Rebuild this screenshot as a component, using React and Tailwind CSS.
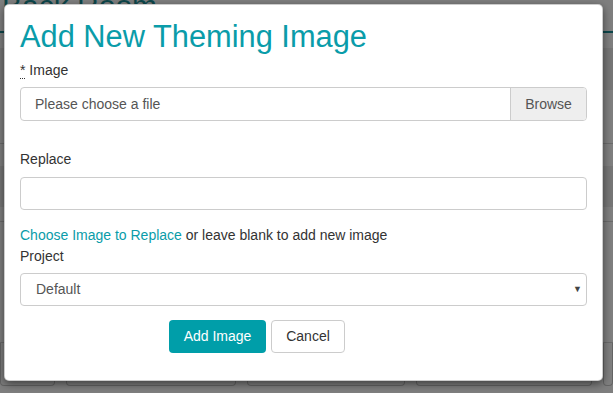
import { useState } from 'react'

function Backdrop() {
  // page behind the dialog (dimmed by the overlay)
  return (
    <div className="flex h-full flex-col bg-white">
      <div className="h-[33px] border-b-2 border-[#1b8f96] pl-[2px]">
        <div className="-mt-[12px] text-[30px] leading-[36px] text-[#1b8f96]">Back Room</div>
      </div>
      <div className="h-[15px]" />
      <div className="h-[42px] bg-[#ececec]" />
      <div className="h-[54px] border-b border-[#d6d6d6]" />
      <div className="h-[22px]" />
      <div className="h-[41px] bg-[#ececec]" />
      <div className="h-[15px] border-b border-[#d6d6d6]" />
      <div className="h-[121px] border-b border-[#d6d6d6]" />
      <div className="flex h-[43px] gap-[11px]">
        <div className="w-[55px] rounded-b border border-t-0 border-[#c9c9c9]" />
        <div className="w-[170px] rounded-b border border-t-0 border-[#c9c9c9]" />
        <div className="w-[158px] rounded-b border border-t-0 border-[#c9c9c9]" />
        <div className="w-[176px] rounded-b border border-t-0 border-[#c9c9c9]" />
        <div className="flex-1 rounded-b border border-t-0 border-[#c9c9c9]" />
      </div>
    </div>
  )
}

export default function App() {
  const [project, setProject] = useState('Default')

  return (
    <div
      className="relative h-[393px] w-[613px] overflow-hidden text-[14px] text-[#333]"
      style={{ fontFamily: '"Liberation Sans", Arial, sans-serif' }}
    >
      <Backdrop />
      <div className="absolute inset-0 bg-black/50" />

      <div className="absolute left-[4px] top-[4px] h-[377px] w-[599px] rounded-[5px] border border-black/20 bg-white px-[15px] shadow-[0_3px_9px_rgba(0,0,0,0.5)]">
        <h2 className="mt-[13px] text-[30.8px] leading-[38px] text-[#0a9ca9]">Add New Theming Image</h2>

        <label className="mt-[4px] block leading-[20px]">
          <abbr className="cursor-help border-b border-dotted border-[#333] no-underline" title="required">*</abbr> Image
        </label>
        <div className="mt-[7px] flex h-[34px] rounded-[4px] border border-[#ccc]">
          <div className="flex flex-1 items-center pl-[14px] text-[#555]">Please choose a file</div>
          <div className="flex w-[76px] items-center justify-center rounded-r-[3px] border-l border-[#ccc] bg-[#eee] text-[#555]">
            Browse
          </div>
        </div>

        <label className="mt-[28px] block leading-[20px]">Replace</label>
        <input className="mt-[8px] block h-[33px] w-full rounded-[4px] border border-[#ccc] px-[12px] outline-none" />

        <p className="mt-[15px] leading-[20px]">
          <a className="text-[#0a9ca9]">Choose Image to Replace</a> or leave blank to add new image
        </p>
        <label className="mt-[1px] block leading-[20px]">Project</label>
        <div className="relative mt-[7px]">
          <select
            value={project}
            onChange={(e) => setProject(e.target.value)}
            className="block h-[33px] w-full appearance-none rounded-[4px] border border-[#ccc] bg-white pl-[15px] text-[#555] outline-none"
          >
            <option>Default</option>
          </select>
          <span className="pointer-events-none absolute right-[5px] top-[10px] text-[9px] text-[#444]">▼</span>
        </div>

        <div className="mt-[14px] flex justify-center gap-[5px] pr-[93px]">
          <button className="h-[33px] w-[97px] rounded-[4px] bg-[#009ea9] text-white">Add Image</button>
          <button className="h-[33px] w-[74px] rounded-[4px] border border-[#ccc] bg-white text-[#333]">Cancel</button>
        </div>
      </div>
    </div>
  )
}
